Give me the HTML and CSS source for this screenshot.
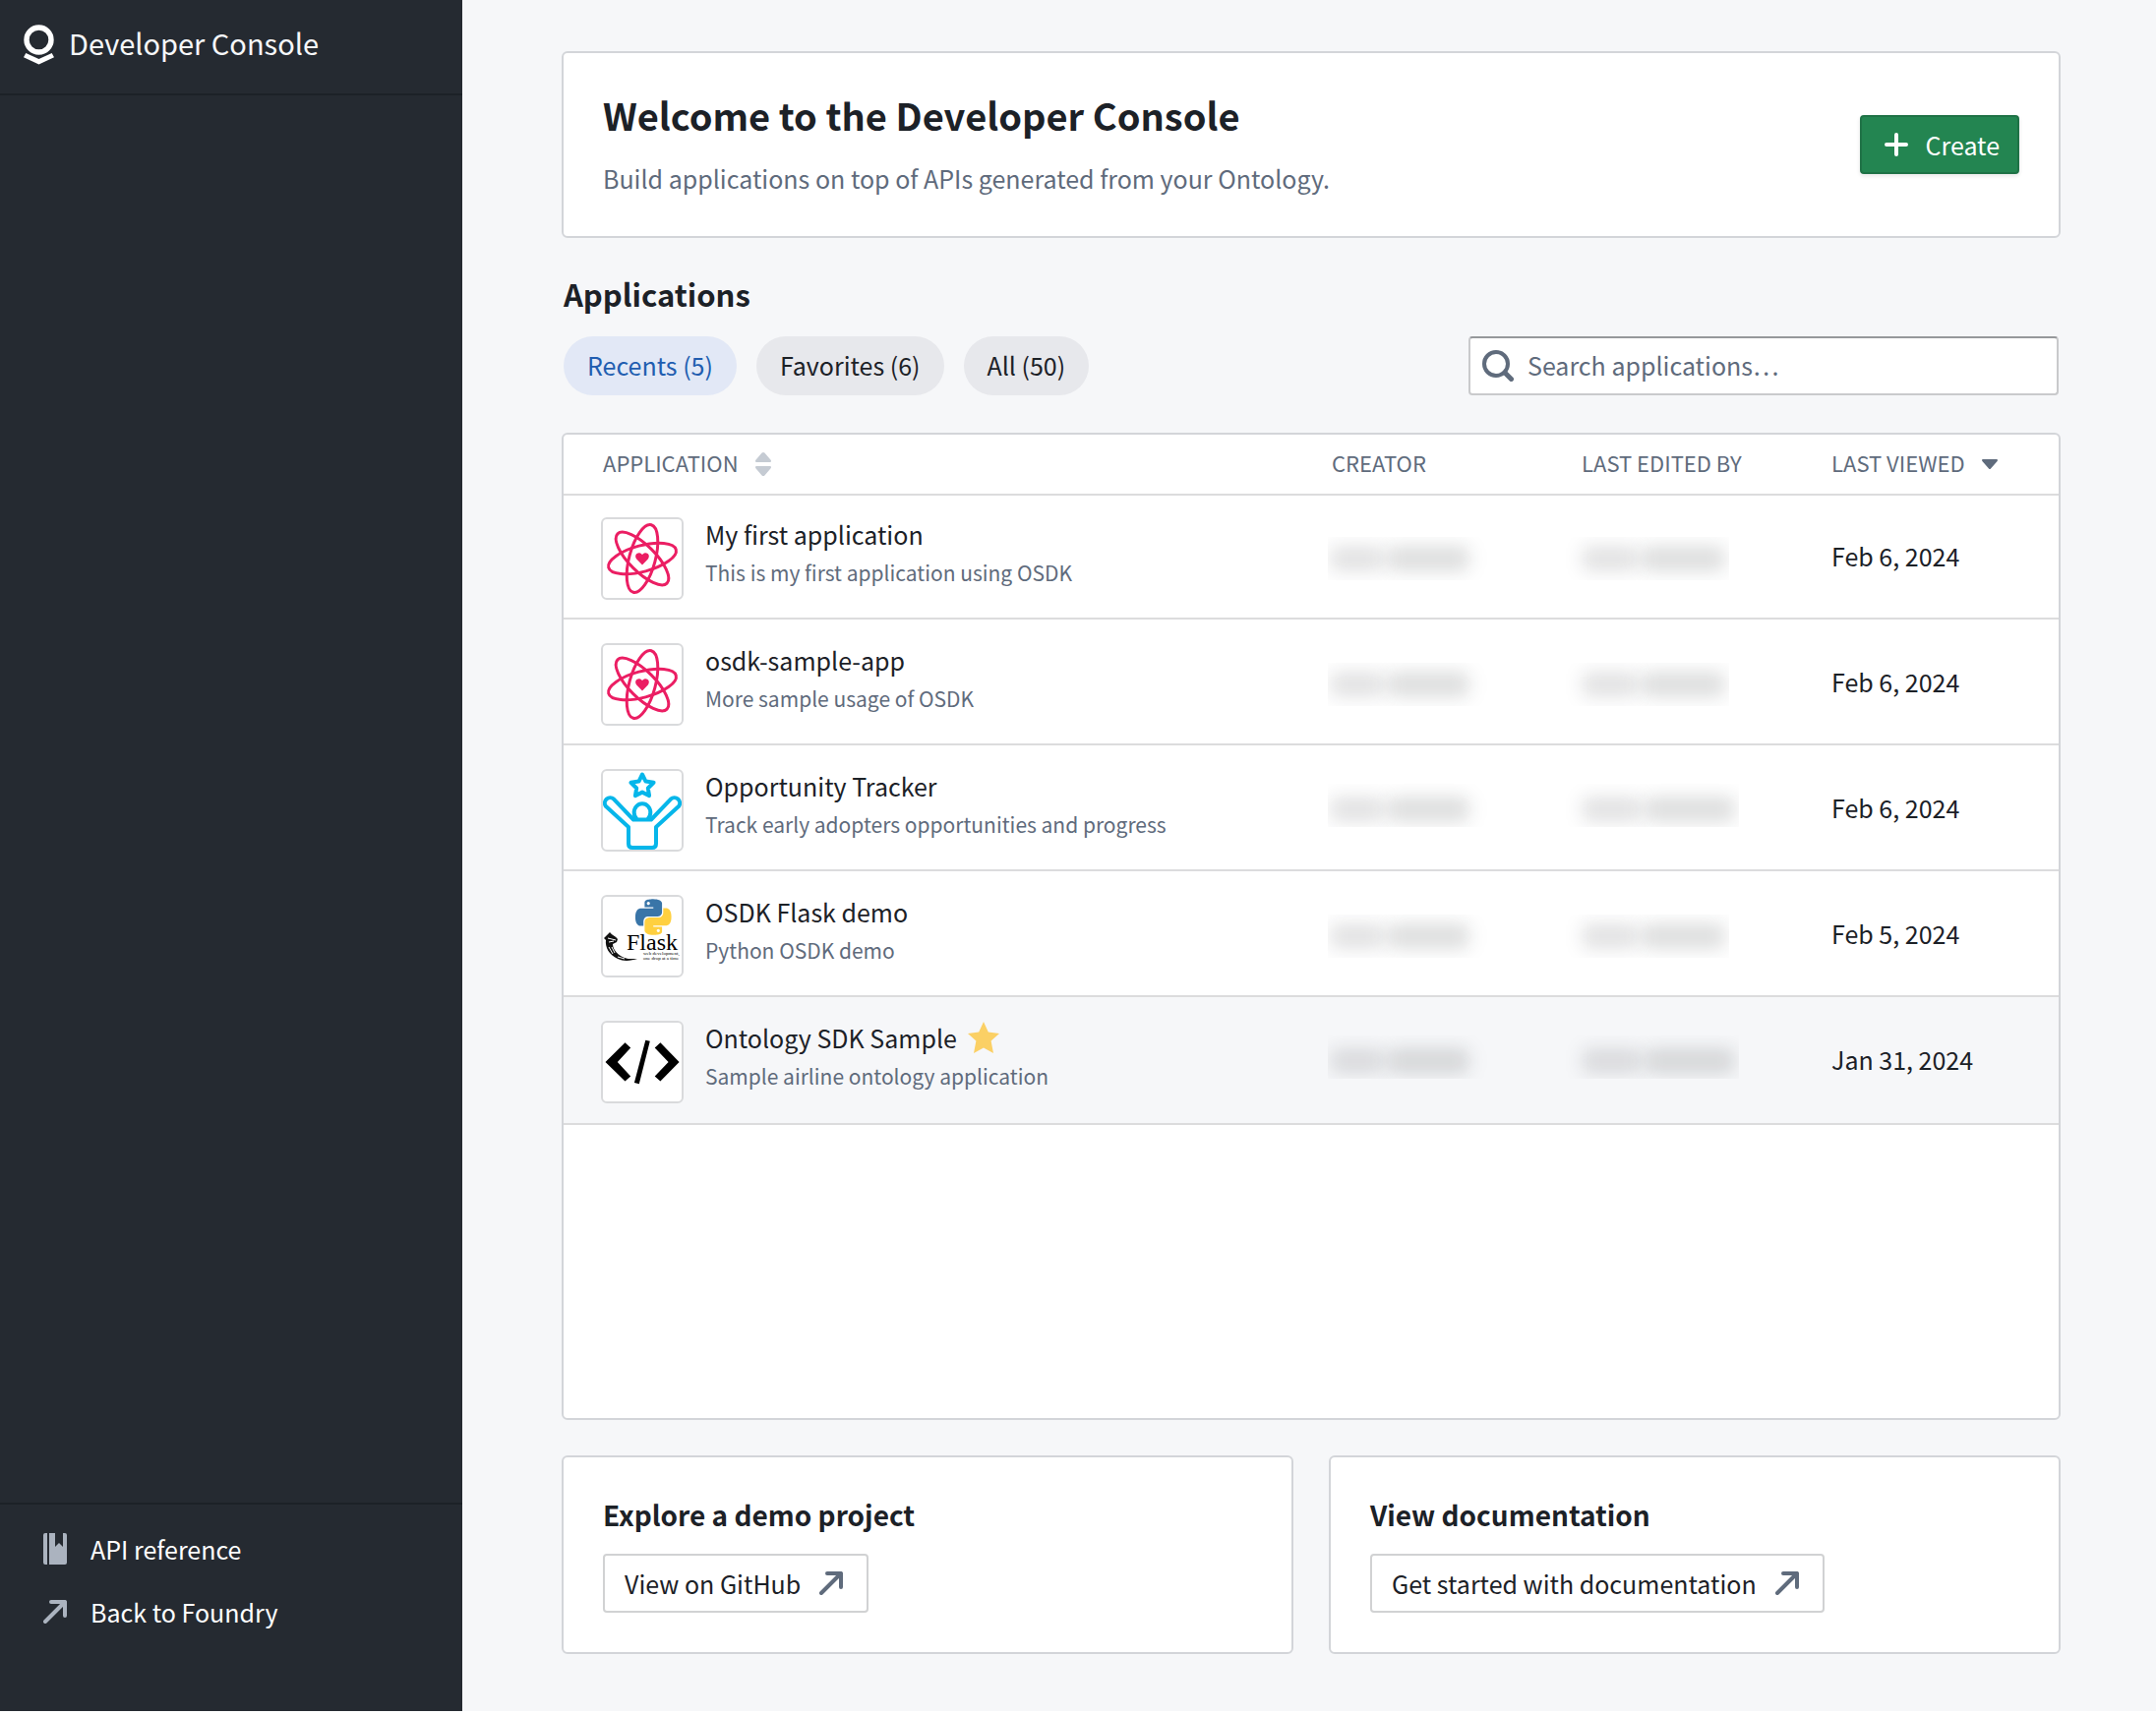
FILE: index.html
```html
<!DOCTYPE html>
<html lang="en">
<head>
<meta charset="utf-8">
<title>Developer Console</title>
<link rel="stylesheet" href="styles.css">
</head>
<body>
<svg class="sprite" aria-hidden="true">
  <symbol id="arrow" viewBox="0 0 24 24"><path d="M8 2H22V16M22 2 2 22" fill="none" stroke="currentColor" stroke-width="4" stroke-linecap="round" stroke-linejoin="round"/></symbol>
  <symbol id="atom" viewBox="0 0 80 80">
    <g fill="none" stroke="#eb1e63" stroke-width="3">
      <ellipse cx="40" cy="40" rx="35.5" ry="13.3" transform="rotate(45 40 40)"/>
      <ellipse cx="40" cy="40" rx="35.5" ry="13.3" transform="rotate(-15 40 40)"/>
      <ellipse cx="40" cy="40" rx="35.5" ry="13.3" transform="rotate(-75 40 40)"/>
    </g>
    <path d="M40 46.5 34.2 40.400C31.600 37 34.400 34 37 34.300c1.500.1 2.400.9 3 2 .6-1.100 1.500-1.900 3-2 2.600-.3 5.400 2.700 2.800 6.100z" fill="#eb1e63"/>
  </symbol>
</svg>
<div class="shell">
  <aside class="sidebar">
    <div class="brand">
      <svg class="brand-logo" viewBox="0 0 31 41" aria-hidden="true"><circle cx="15.500" cy="15.500" r="12.500" fill="none" stroke="#fff" stroke-width="5.400"/><path d="M2.300 29 15.500 35 28.700 29 31 33.300 15.500 40.500 0 33.300z" fill="#fff"/></svg>
      <span class="brand-name">Developer Console</span>
    </div>
    <nav class="side-nav">
      <a class="side-link" href="#api"><svg class="icon-book" viewBox="0 0 24 32" aria-hidden="true"><path fill="currentColor" d="M0 2a2 2 0 0 1 2-2h2v32H2a2 2 0 0 1-2-2zM6 0h6v14l4-4 4 4V0h2a2 2 0 0 1 2 2v28a2 2 0 0 1-2 2H6z"/></svg><span>API reference</span></a>
      <a class="side-link" href="#foundry"><svg class="icon-arrow" aria-hidden="true"><use href="#arrow"/></svg><span>Back to Foundry</span></a>
    </nav>
  </aside>
  <main class="main">
    <section class="card welcome">
      <div>
        <h1>Welcome to the Developer Console</h1>
        <p>Build applications on top of APIs generated from your Ontology.</p>
      </div>
      <button class="create" type="button"><svg viewBox="0 0 24 24" aria-hidden="true"><path d="M12 2V22M2 12H22" stroke="currentColor" stroke-width="4" stroke-linecap="round"/></svg>Create</button>
    </section>

    <h2>Applications</h2>
    <div class="toolbar">
      <div class="filters">
        <button class="pill active" type="button">Recents (5)</button>
        <button class="pill" type="button">Favorites (6)</button>
        <button class="pill" type="button">All (50)</button>
      </div>
      <label class="search">
        <svg viewBox="0 0 32 32" aria-hidden="true"><circle cx="14" cy="14" r="12" fill="none" stroke="currentColor" stroke-width="4"/><path d="M23 23 29.500 29.500" stroke="currentColor" stroke-width="5" stroke-linecap="round"/></svg>
        <input type="search" placeholder="Search applications…" aria-label="Search applications">
      </label>
    </div>

    <section class="card apps">
      <table>
        <colgroup><col><col class="col-person"><col class="col-person"><col class="col-date"></colgroup>
        <thead>
          <tr>
            <th scope="col"><span class="th">Application<svg class="sort" viewBox="0 0 16 24" aria-hidden="true"><path fill="#c5cbd3" d="M8 0c.6 0 1 .2 1.400.6l6 7c.4.400.6.800.6 1.100 0 .8-.5 1.300-1.300 1.300H1.300C.5 10 0 9.500 0 8.700c0-.3.2-.7.6-1.100l6-7C7 .2 7.400 0 8 0zM8 24c-.6 0-1-.2-1.400-.6l-6-7c-.4-.4-.6-.8-.6-1.100 0-.8.5-1.300 1.300-1.300h13.400c.8 0 1.300.5 1.300 1.300 0 .3-.2.7-.6 1.100l-6 7c-.4.400-.8.6-1.400.6z"/></svg></span></th>
            <th scope="col">Creator</th>
            <th scope="col">Last edited by</th>
            <th scope="col"><span class="th">Last viewed<svg class="caret" viewBox="0 0 16 10" aria-hidden="true"><path fill="currentColor" d="M1.200 0h13.600c1.100 0 1.500 1.100.8 1.900L9 9.400c-.6.700-1.400.7-2 0L.4 1.900C-.3 1.100.1 0 1.200 0z"/></svg></span></th>
          </tr>
        </thead>
        <tbody>
          <tr>
            <td><div class="app">
              <svg class="tile" viewBox="0 0 80 80" aria-hidden="true"><use href="#atom"/></svg>
              <div><div class="name">My first application</div><div class="desc">This is my first application using OSDK</div></div>
            </div></td>
            <td class="person"><div class="redacted"></div></td>
            <td class="person edited"><div class="redacted"></div></td>
            <td class="date">Feb 6, 2024</td>
          </tr>
          <tr>
            <td><div class="app">
              <svg class="tile" viewBox="0 0 80 80" aria-hidden="true"><use href="#atom"/></svg>
              <div><div class="name">osdk-sample-app</div><div class="desc">More sample usage of OSDK</div></div>
            </div></td>
            <td class="person"><div class="redacted"></div></td>
            <td class="person edited"><div class="redacted"></div></td>
            <td class="date">Feb 6, 2024</td>
          </tr>
          <tr>
            <td><div class="app">
              <svg class="tile" viewBox="2 2 80 80" aria-hidden="true"><g fill="none" stroke="#06b6ea" stroke-width="4" stroke-linejoin="round">
                <path d="M42 5.500 45.500 12.600 53.600 13.800 47.800 19.500 49.100 27.200 42 23.600 34.900 27.200 36.200 19.500 30.400 13.800 38.500 12.600z"/>
                <path d="M33 51.500 13 30.600A5.500 5.500 0 0 0 4.800 37.800L28 59V76q0 4 4 4H52q4 0 4-4V59L79.200 37.800A5.500 5.500 0 0 0 71 30.600L51 51.500z"/>
                <path d="M36.500 51a8.300 9 0 1 1 11 0"/></g></svg>
              <div><div class="name">Opportunity Tracker</div><div class="desc">Track early adopters opportunities and progress</div></div>
            </div></td>
            <td class="person raised"><div class="redacted"></div></td>
            <td class="person edited raised"><div class="redacted wide"></div></td>
            <td class="date">Feb 6, 2024</td>
          </tr>
          <tr>
            <td><div class="app">
              <svg class="tile" viewBox="2 2 80 80" aria-hidden="true">
                <defs><path id="snake" d="M14.250.18l.9.2.73.26.59.3.45.32.34.34.25.34.16.33.1.3.04.26.02.2-.01.13V8.500l-.05.63-.13.55-.21.46-.26.38-.3.31-.33.25-.35.19-.35.14-.33.1-.3.07-.26.04-.21.02H8.770l-.69.05-.59.14-.5.22-.41.27-.33.32-.27.35-.2.36-.15.37-.1.35-.07.32-.04.27-.02.21v3.060H3.170l-.21-.03-.28-.07-.32-.12-.35-.18-.36-.26-.36-.36-.35-.46-.32-.59-.28-.73-.21-.88-.14-1.050-.05-1.230.06-1.220.16-1.040.24-.87.32-.71.36-.57.4-.44.42-.33.42-.24.4-.16.36-.1.32-.05.24-.01h.16l.06.01h8.160v-.83H6.180l-.01-2.750-.02-.37.05-.34.11-.31.17-.28.25-.26.31-.23.38-.2.44-.18.51-.15.58-.12.64-.1.71-.06.77-.04.84-.02 1.270.05zM7.950 2.160l-.23.33-.08.41.08.41.23.34.33.22.41.09.41-.09.33-.22.23-.34.08-.41-.08-.41-.23-.33-.33-.22-.41-.09-.41.09z"/></defs>
                <g transform="translate(35 4.300) scale(1.520)"><use href="#snake" fill="#3975a8"/><use href="#snake" fill="#ffd040" transform="rotate(180 12 12)"/></g>
                <text class="flask-word" x="26" y="56">Flask</text>
                <text class="flask-tag" x="43" y="61">web development,</text>
                <text class="flask-tag" x="43" y="66">one drop at a time</text>
                <path d="M9 38c2 3 6 4 8 7l-1 3-4 2c0 6 6 12 12 14 4 1.500 8 1 13 1-6 2-14 3-20 0C8 61 4 53 5 46l-2-2z" fill="#111"/>
                <path d="M7 44l8 2M8 48l5-1M8 53l4 7M11 53l3 6M17 63l7 2" stroke="#fff" stroke-width="1" fill="none"/>
              </svg>
              <div><div class="name">OSDK Flask demo</div><div class="desc">Python OSDK demo</div></div>
            </div></td>
            <td class="person"><div class="redacted"></div></td>
            <td class="person edited"><div class="redacted"></div></td>
            <td class="date">Feb 5, 2024</td>
          </tr>
          <tr class="hovered">
            <td><div class="app">
              <svg class="tile" viewBox="2 2 80 80" aria-hidden="true"><path d="M4.500 42 24.500 22.300 30.200 27.500 16.800 42 30.200 56.500 24.500 61.500zM79.600 42 60.400 22.300 54.700 27.500 68.600 42 54.700 56.500 60.400 61.500zM45.300 19.700 49.800 20.700 38.800 64.200 33.900 63z"/></svg>
              <div><div class="name">Ontology SDK Sample<svg class="star" viewBox="0 0 32 32" aria-hidden="true"><path fill="#fbd065" d="M16 0 20.800 10.600 32 11.900 23.600 19.600 26 32 16 26.400 6 32 8.400 19.600 0 11.900 11.200 10.600z"/></svg></div><div class="desc">Sample airline ontology application</div></div>
            </div></td>
            <td class="person raised"><div class="redacted"></div></td>
            <td class="person edited raised"><div class="redacted wide"></div></td>
            <td class="date">Jan 31, 2024</td>
          </tr>
        </tbody>
      </table>
    </section>

    <div class="resources">
      <section class="card resource">
        <h3>Explore a demo project</h3>
        <a class="outlined" href="#github">View on GitHub<svg class="icon-arrow" aria-hidden="true"><use href="#arrow"/></svg></a>
      </section>
      <section class="card resource">
        <h3>View documentation</h3>
        <a class="outlined" href="#docs">Get started with documentation<svg class="icon-arrow" aria-hidden="true"><use href="#arrow"/></svg></a>
      </section>
    </div>
  </main>
</div>
</body>
</html>
```
FILE: styles.css
```css
* { box-sizing: border-box; }

body {
  margin: 0;
  background: #fff;
  color: #1c2127;
  font-family: "Noto Sans CJK SC", "Noto Sans", sans-serif;
  font-size: 25px;
  line-height: 36px;
}

h1, h2, h3, p { margin: 0; }
h1, h2, h3 { font-weight: 600; }
button, input { font: inherit; }
a { color: inherit; text-decoration: none; }
svg { display: block; flex: none; }
.sprite { position: absolute; width: 0; height: 0; }

.shell {
  display: flex;
  min-height: calc(100vh - 4px);
  background: #f6f7f9;
}

/* Sidebar */
.sidebar {
  display: flex;
  flex-direction: column;
  justify-content: space-between;
  flex: 0 0 470px;
  background: #252a31;
  color: #fff;
}
.brand {
  display: flex;
  align-items: center;
  gap: 15px;
  padding: 20px 24px 25px;
  border-bottom: 2px solid #1c2127;
  color: #f6f7f9;
  font-size: 29px;
  line-height: 46px;
}
.brand-logo { width: 31px; height: 41px; }
.brand-name { padding-bottom: 4px; }
.side-nav {
  padding: 13px 0 69px;
  border-top: 2px solid #1c2127;
}
.side-link {
  display: flex;
  align-items: center;
  gap: 24px;
  height: 64px;
  padding: 0 44px;
}
.side-link svg { color: #abb3bf; }
.icon-book { width: 24px; height: 32px; }
.icon-arrow { width: 24px; height: 24px; }

/* Main column */
.main {
  display: flex;
  flex-direction: column;
  flex: 1;
  min-width: 0;
  padding: 52px 97px 58px 101px;
}
.card {
  border: 2px solid #d3d5d9;
  border-radius: 6px;
  background: #fff;
}

.welcome {
  display: flex;
  align-items: center;
  justify-content: space-between;
  padding: 40px;
}
.welcome h1 { font-size: 38px; line-height: 46px; }
.welcome p { margin-top: 22px; color: #5f6b7c; line-height: 38px; }
.create {
  display: flex;
  align-items: center;
  gap: 18px;
  height: 60px;
  padding: 0 18px 0 23px;
  border: 2px solid #1f7246;
  border-radius: 4px;
  background: #238551;
  box-shadow: 0 2px 4px rgba(17, 20, 24, .1);
  color: #fff;
}
.create svg { width: 24px; height: 24px; }

h2 { margin: 37px 0 23px 2px; font-size: 31px; line-height: 40px; }

.toolbar {
  display: flex;
  justify-content: space-between;
  padding: 0 2px;
  margin-bottom: 38px;
}
.filters { display: flex; gap: 20px; }
.pill {
  height: 60px;
  padding: 0 24px 2px;
  border: 0;
  border-radius: 30px;
  background: #e7e8ec;
  color: #1c2127;
}
.pill.active { background: #e2e8f6; color: #215db0; }
.search {
  display: flex;
  align-items: center;
  gap: 14px;
  width: 600px;
  height: 60px;
  padding: 0 12px;
  border: 2px solid #c9cacc;
  border-top-color: #96989b;
  border-radius: 4px;
  background: #fff;
  color: #5f6b7c;
}
.search svg { width: 32px; height: 32px; }
.search input {
  flex: 1;
  min-width: 0;
  padding: 0 0 2px;
  border: 0;
  outline: 0;
  background: none;
}
.search input::placeholder { color: #5f6b7c; opacity: 1; }

/* Application table */
.apps { flex: 1; }
table { width: 100%; table-layout: fixed; border-collapse: separate; border-spacing: 0; }
.col-person { width: 254px; }
.col-date { width: 271px; }
th {
  height: 62px;
  padding: 0 0 4px 40px;
  border-bottom: 2px solid #dcdcdd;
  color: #5f6b7c;
  font-size: 22px;
  font-weight: 400;
  text-align: left;
  text-transform: uppercase;
}
.th { display: flex; align-items: center; gap: 17px; }
.th svg { margin-top: 4px; }
.sort { width: 16px; height: 24px; }
.caret { width: 16px; height: 10px; }
td { padding: 24px 0 18px 40px; border-bottom: 2px solid #dcdcdd; }
td:first-child { padding-left: 38px; }
td.date { padding-bottom: 24px; }
tr:first-child td { padding-top: 22px; }
tr:last-child td { padding-bottom: 20px; }
tr:last-child td.date { padding-bottom: 26px; }
.hovered td { background: #f6f7f9; }

.app { display: flex; gap: 22px; }
.tile {
  width: 84px;
  height: 84px;
  border: 2px solid #d9dadc;
  border-radius: 6px;
  background: #fff;
}
.name { display: flex; align-items: center; gap: 11px; line-height: 34px; }
.desc { margin-top: 5px; color: #5f6b7c; font-size: 21px; line-height: 34px; }
.star { width: 32px; height: 32px; }
.flask-word { font: 24px "Liberation Serif", serif; }
.flask-tag { font: 5px "Liberation Serif", serif; }

/* Obscured user names */
td.person { padding-left: 36px; }
td.edited { padding-left: 24px; }
.redacted {
  display: flex;
  align-items: center;
  gap: 4px;
  width: 166px;
  height: 44px;
  padding: 0 22px 0 2px;
  overflow: hidden;
}
.redacted::before, .redacted::after {
  content: "";
  flex: 2;
  height: 26px;
  border-radius: 8px;
  background: rgba(17, 20, 24, .12);
  filter: blur(9px);
}
.redacted::after { flex: 3; background: rgba(17, 20, 24, .14); }
.edited .redacted { padding: 0 4px 0 16px; }
.redacted.wide { width: 176px; }
.raised .redacted { margin-bottom: 10px; padding-top: 8px; }
.edited.raised .redacted { padding-top: 8px; }

/* Resource cards */
.resources { display: grid; grid-template-columns: 1fr 1fr; gap: 36px; margin-top: 36px; }
.resource { padding: 38px 40px 40px; }
.resource h3 { margin-bottom: 20px; font-size: 28px; line-height: 40px; }
.outlined {
  display: inline-flex;
  align-items: center;
  gap: 19px;
  height: 60px;
  padding: 0 24px 1px 20px;
  border: 2px solid #d1d2d3;
  border-radius: 4px;
  vertical-align: top;
}
.outlined svg { color: #5f6b7c; }
```
